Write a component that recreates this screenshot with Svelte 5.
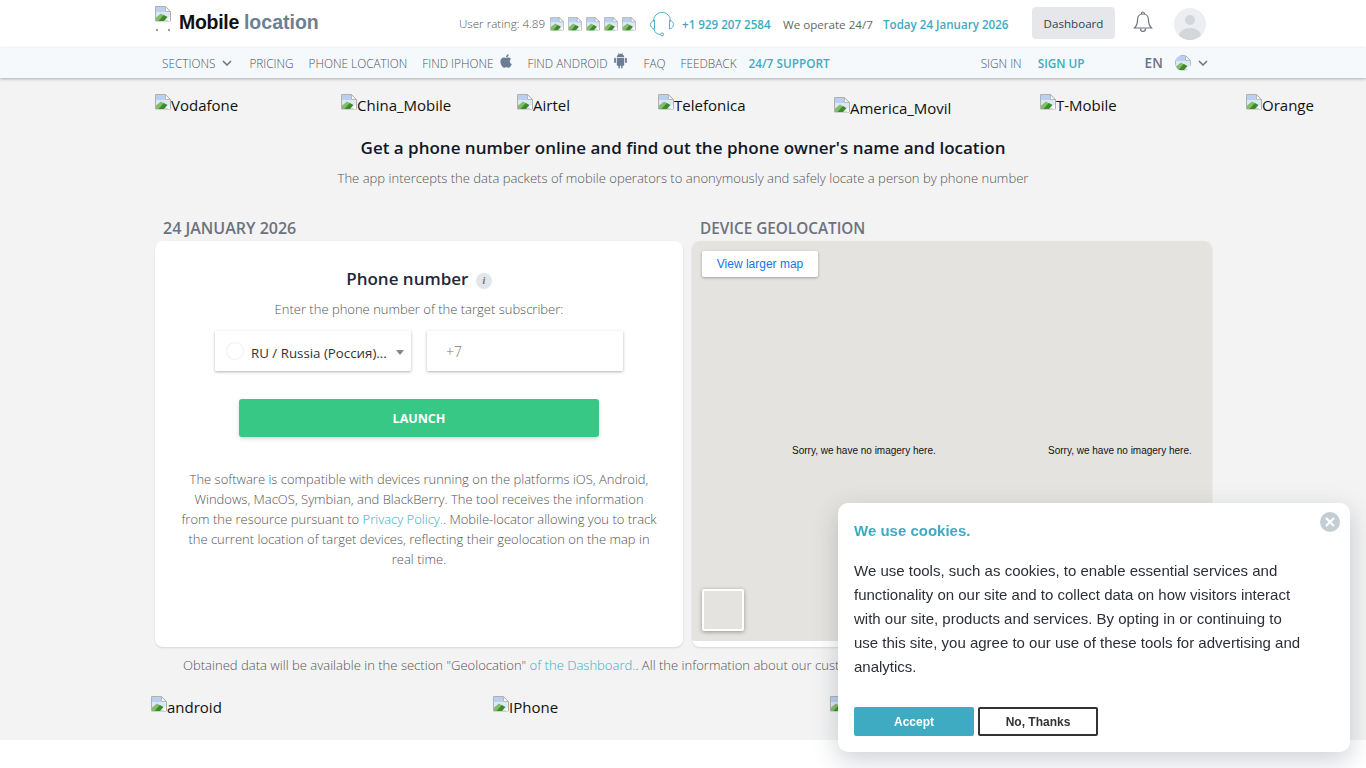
<script>
  const logos = [
    { alt: 'Vodafone', w: 186 },
    { alt: 'China_Mobile', w: 176 },
    { alt: 'Airtel', w: 141 },
    { alt: 'Telefonica', w: 176 },
    { alt: 'America_Movil', w: 206, low: true },
    { alt: 'T-Mobile', w: 206 },
    { alt: 'Orange', w: 70 }
  ];
  const stars = [1, 2, 3, 4, 5];
</script>

{#snippet broken()}
  <svg class="broken" viewBox="0 0 16 16" width="16" height="16" aria-hidden="true">
    <path d="M.5.500h10l5 5v9.500H.5z" fill="#f4f7fb" stroke="#b0b0b0"/>
    <path d="M1 1h9.300v5H15v3H1z" fill="#b9d0f0"/>
    <path d="M1 6h14v5l-3 .5-3 3.500H1z" fill="#dce8f6"/>
    <path d="M1 15v-3.500L6 7.500l3.500 2L5 15z" fill="#86bb6c"/>
    <path d="M3.500 15l5.300-6 3.700 2L9 15z" fill="#3a8c26"/>
    <path d="M12.500 15l2.500-3.500V15z" fill="#fff"/>
    <path d="M10.500.8v4.700h4.700z" fill="#fff" stroke="#a8a8a8" stroke-width=".8"/>
  </svg>
{/snippet}

<div class="page">
  <header class="top">
    <div class="wrap top-in">
      <div class="logo">
        <span class="logo-img">{@render broken()}<i></i></span>
        <b class="logo-a">Mobile</b><b class="logo-b">location</b>
      </div>
      <div class="rating">
        <span>User rating: 4.89</span>
        <span class="stars">{#each stars as s (s)}{@render broken()}{/each}</span>
      </div>
      <svg class="headset" viewBox="0 0 26 26" width="26" height="26" fill="none" stroke="#3eabc3" stroke-width=".9">
        <path d="M4.500 10.500C4.500 5 8 1.500 13 1.500s8.500 3.500 8.500 9"/>
        <path d="M5.500 9C3 10 1.500 11.500 1.500 13.500S3 17.500 5.500 18zM20.500 9c2.500 1 4 2.500 4 4.500s-1.500 4-4 4.500z"/>
        <path d="M5 18c.5 3.500 3 5.500 6.500 5.500"/>
        <circle cx="13" cy="23.500" r="1.500"/>
      </svg>
      <span class="phone">+1 929 207 2584</span>
      <span class="operate">We operate 24/7</span>
      <span class="today">Today 24 January 2026</span>
      <button class="dash">Dashboard</button>
      <svg class="bell" viewBox="0 0 20 22" width="20" height="22" fill="none" stroke="#6b7280" stroke-width="1.200">
        <path d="M10 3c-3.500 0-5.500 2.500-5.500 6 0 4-1 6-3 8h17c-2-2-3-4-3-8 0-3.500-2-6-5.500-6z"/>
        <path d="M8.500 3c0-1 .5-2 1.500-2s1.500 1 1.500 2M7.500 17.500c0 1.800 1 3 2.500 3s2.500-1.200 2.500-3"/>
      </svg>
      <span class="avatar"><i></i><em></em></span>
    </div>
  </header>

  <nav class="nav">
    <div class="wrap nav-in">
      <a class="n sec" href="#s">SECTIONS
        <svg viewBox="0 0 10 6" width="10" height="6" fill="none" stroke="#6b7280" stroke-width="1.500"><path d="M1 1l4 4 4-4"/></svg>
      </a>
      <a class="n m15" href="#p">PRICING</a>
      <a class="n m15" href="#l">PHONE LOCATION</a>
      <a class="n gi" href="#i">FIND IPHONE
        <svg class="up" viewBox="0 0 14 16" width="14" height="16" fill="#6b7c93"><path d="M11.600 8.400c0-1.600 1.300-2.400 1.400-2.500-.8-1.100-2-1.300-2.400-1.300-1-.1-2 .6-2.500.6s-1.300-.6-2.200-.6C4.700 4.600 3.600 5.300 3 6.300c-1.200 2-.3 5.100.9 6.800.6.800 1.300 1.700 2.200 1.700.9 0 1.200-.6 2.300-.6s1.400.6 2.300.6 1.500-.8 2.100-1.700c.7-1 1-1.900 1-2-.1 0-1.900-.7-1.900-2.700zM9.900 3.500c.5-.6.800-1.400.7-2.200-.7 0-1.500.5-2 1.100-.4.500-.8 1.300-.7 2.100.8 0 1.500-.4 2-1z"/></svg>
      </a>
      <a class="n gi m16" href="#a">FIND ANDROID
        <svg class="up" viewBox="0 0 14 16" width="15" height="17" fill="#6b7c93"><path d="M3.500 5.300h7V12c0 .5-.4.900-.9.900H9v2c0 1-1.400 1-1.400 0v-2H6.400v2c0 1-1.400 1-1.400 0v-2h-.6c-.5 0-.9-.4-.9-.9zM1.800 5.300c.5 0 .9.300.9.800v3.600c0 1-1.700 1-1.700 0V6.100c0-.5.400-.8.800-.8zM12.200 5.300c.4 0 .8.300.8.800v3.600c0 1-1.700 1-1.700 0V6.100c0-.5.400-.8.900-.8zM3.500 4.800C3.500 3.500 4.300 2.500 5.300 2L4.700.9l.3-.2.700 1.200c.8-.3 1.800-.3 2.600 0L9 .7l.3.200L8.700 2c1 .5 1.800 1.500 1.800 2.800z"/></svg>
      </a>
      <a class="n m15" href="#f">FAQ</a>
      <a class="n m12" href="#b">FEEDBACK</a>
      <a class="n teal" href="#t">24/7 SUPPORT</a>
      <a class="n signin" href="#in">SIGN IN</a>
      <a class="n teal signup" href="#up">SIGN UP</a>
      <span class="lang">EN</span>
      <span class="flag">{@render broken()}</span>
      <svg class="lc" viewBox="0 0 10 6" width="10" height="6" fill="none" stroke="#6b7280" stroke-width="1.500"><path d="M1 1l4 4 4-4"/></svg>
    </div>
  </nav>

  <main class="main">
    <div class="wrap">
      <div class="logos">
        {#each logos as l (l.alt)}
          <span class="alt" class:low={l.low} style="width:{l.w}px">{@render broken()}{l.alt}</span>
        {/each}
      </div>

      <h1>Get a phone number online and find out the phone owner's name and location</h1>
      <p class="sub">The app intercepts the data packets of mobile operators to anonymously and safely locate a person by phone number</p>

      <div class="cols">
        <section class="col-l">
          <h2>24 JANUARY 2026</h2>
          <div class="card">
            <h3>Phone number <span class="info">i</span></h3>
            <p class="hint">Enter the phone number of the target subscriber:</p>
            <div class="fields">
              <div class="sel">
                <span class="dot"></span>
                <span class="sel-t">RU / Russia (Россия)...</span>
                <span class="tri"></span>
              </div>
              <div class="inp"><span>+7</span></div>
            </div>
            <button class="launch">LAUNCH</button>
            <p class="desc">The software is compatible with devices running on the platforms iOS, Android,<br>Windows, MacOS, Symbian, and BlackBerry. The tool receives the information<br>from the resource pursuant to <a href="#pp">Privacy Policy.</a>. Mobile-locator allowing you to track<br>the current location of target devices, reflecting their geolocation on the map in<br>real time.</p>
          </div>
        </section>
        <section class="col-r">
          <h2>DEVICE GEOLOCATION</h2>
          <div class="mapcard">
            <div class="map">
              <button class="larger">View larger map</button>
              <span class="noimg a">Sorry, we have no imagery here.</span>
              <span class="noimg b">Sorry, we have no imagery here.</span>
              <span class="thumb"></span>
            </div>
          </div>
        </section>
      </div>

      <p class="note">Obtained data will be available in the section "Geolocation" <a href="#d">of the Dashboard.</a>. All the information about our customers is strictly confidential.</p>

      <div class="devices">
        <span class="alt d1">{@render broken()}android</span>
        <span class="alt d2">{@render broken()}IPhone</span>
        <span class="alt d3">{@render broken()}Windows</span>
      </div>
    </div>
  </main>

  <aside class="cookie">
    <button class="x" aria-label="Close">
      <svg viewBox="0 0 10 10" width="10" height="10" stroke="#fff" stroke-width="2.200"><path d="M1 1l8 8M9 1l-8 8"/></svg>
    </button>
    <h4>We use cookies.</h4>
    <p>We use tools, such as cookies, to enable essential services and functionality on our site and to collect data on how visitors interact with our site, products and services. By opting in or continuing to use this site, you agree to our use of these tools for advertising and analytics.</p>
    <div class="cbtns">
      <button class="acc">Accept</button>
      <button class="no">No, Thanks</button>
    </div>
  </aside>
</div>

<style>
  :global(body) { margin: 0; background: #fff; overflow: hidden; }
  .page { font-family: "Open Sans", "Noto Sans", sans-serif; height: 768px; overflow: hidden; position: relative; }
  .wrap { width: 1056px; margin: 0 0 0 155px; }
  .broken { display: inline-block; flex: none; }
  button { font-family: inherit; cursor: pointer; }
  a { text-decoration: none; }

  .top { height: 48px; background: #fff; }
  .top-in { display: flex; align-items: center; height: 48px; font-size: 11.600px; color: #6b7280; }
  .logo { width: 304px; display: flex; align-items: center; font-family: "Liberation Sans", sans-serif; font-size: 19.500px; height: 44px; margin-bottom: 4px; }
  .logo-img { width: 24px; height: 36px; flex: none; overflow: hidden; display: block; position: relative; }
  .logo-img i { position: absolute; left: 1px; top: 25px; width: 14px; height: 2px; border-left: 2px dotted #999; border-right: 2px dotted #999; box-sizing: border-box; }
  .logo-a { color: #111; margin-right: 5px; letter-spacing: -.3px; }
  .logo-b { color: #6b7f95; }
  .rating { display: flex; align-items: center; gap: 5px; font-weight: 300; width: 186px; margin-bottom: 1px; color: #555; white-space: nowrap; }
  .stars { display: inline-flex; gap: 4px; margin-top: 1px; }
  .stars :global(.broken) { width: 14px; height: 14px; }
  .headset { margin: 0 7px 0 4px; }
  .phone { color: #3eabc3; font-weight: 600; white-space: nowrap; width: 101px; margin-top: 1px; }
  .operate { font-weight: 400; color: #666; white-space: nowrap; width: 100px; margin-top: 1px; }
  .today { color: #3eabc3; font-weight: 600; white-space: nowrap; width: 149px; margin-top: 1px; }
  .dash { width: 83px; height: 32px; border: 0; border-radius: 4px; background: #e5e7eb; color: #374151; font-size: 11.600px; font-weight: 400; padding: 0; margin-bottom: 2px; }
  .bell { margin: 0 21px 4px 18px; }
  .avatar { width: 32px; height: 32px; border-radius: 50%; background: #eceef1; position: relative; overflow: hidden; display: block; }
  .avatar i { position: absolute; left: 11px; top: 7px; width: 10px; height: 10px; border-radius: 50%; background: #d3d6da; }
  .avatar em { position: absolute; left: 5px; top: 20px; width: 22px; height: 16px; border-radius: 50%; background: #d3d6da; }

  .nav { height: 30px; background: #f5f9fc; box-shadow: 0 1px 3px rgba(0,0,0,.3); position: relative; z-index: 2; }
  .nav-in { display: flex; align-items: center; height: 30px; font-size: 11.800px; font-weight: 300; color: #4b5563; padding-left: 7px; box-sizing: border-box; white-space: nowrap; }
  .n { color: #4b5563; margin-right: 14px; display: inline-flex; align-items: center; }
  .m15 { margin-right: 15px; }
  .m12 { margin-right: 12px; }
  .sec { gap: 7px; margin-right: 17px; }
  .gi { gap: 5px; margin-right: 15px; }
  .m16 { margin-right: 16px; }
  .up { margin-top: -5px; }
  .teal { color: #3eabc3; font-weight: 600; }
  .signin { margin-left: 137px; margin-right: 16px; }
  .signup { margin-right: 60px; }
  .lang { font-size: 13.500px; font-weight: 600; color: #6b7280; width: 30px; }
  .flag { width: 16px; height: 16px; border-radius: 50%; overflow: hidden; display: block; }
  .lc { margin-left: 7px; }

  .main { height: 662px; background-color: #f3f3f3; overflow: hidden; }
  .logos { display: flex; height: 25px; padding-top: 15px; white-space: nowrap; font-size: 15px; color: #111; }
  .alt { display: inline-block; line-height: 24px; flex: none; }
  .alt :global(.broken) { vertical-align: 1px; }
  .low { margin-top: 3px; }
  h1 { margin: 19px 0 0; font-size: 17px; line-height: 22px; font-weight: 600; color: #111827; text-align: center; white-space: nowrap; }
  .sub { margin: 10px 0 0; font-size: 13.050px; line-height: 18px; font-weight: 300; color: #555; text-align: center; white-space: nowrap; }
  .cols { display: flex; gap: 9px; margin-top: 31px; width: 1057px; }
  .col-l { width: 528px; }
  .col-r { width: 520px; }
  h2 { margin: 0; height: 23px; padding-left: 8px; font-size: 16px; line-height: 21px; font-weight: 600; color: #6b7280; white-space: nowrap; }
  .col-r h2 { font-size: 15.300px; }
  .card { height: 406px; background: #fff; border-radius: 8px; box-shadow: 0 1px 2px rgba(0,0,0,.12); box-sizing: border-box; padding-top: 26px; text-align: center; }
  h3 { margin: 0; font-size: 17px; line-height: 24px; font-weight: 600; color: #1f2937; }
  .info { display: inline-block; width: 16px; height: 16px; margin-left: 3px; border-radius: 50%; background: #e2e6ea; color: #6b7280; font: italic 700 10px/16px "Liberation Serif", serif; vertical-align: 1px; }
  .hint { margin: 9px 0 0; font-size: 13px; line-height: 18px; font-weight: 300; color: #555; }
  .fields { display: flex; gap: 16px; margin: 13px 0 0 60px; }
  .sel, .inp { height: 40px; width: 196px; background: #fff; box-shadow: 0 1px 3px rgba(0,0,0,.3); display: flex; align-items: center; box-sizing: border-box; border-radius: 1px; }
  .sel { padding-left: 12px; font-size: 13.300px; color: #333; }
  .dot { width: 16px; height: 16px; border-radius: 50%; background: #fff; box-shadow: 0 0 2px rgba(0,0,0,.18); margin-right: 8px; flex: none; }
  .sel-t { width: 138px; text-align: left; white-space: nowrap; margin-top: 3px; }
  .tri { margin-left: 7px; margin-top: 3px; border: 4px solid transparent; border-top: 5px solid #888; border-bottom: 0; }
  .inp { padding-left: 19px; font-size: 14px; font-weight: 300; color: #777; }
  .inp span { margin-top: 1px; }
  .launch { display: block; width: 360px; height: 38px; margin: 28px 0 0 84px; border: 0; border-radius: 3px; background: #36c884; color: #fff; font-size: 12.500px; font-weight: 700; box-shadow: 0 2px 4px rgba(0,0,0,.15); }
  .desc { margin: 32px 0 0; font-size: 13px; line-height: 20px; font-weight: 300; color: #555; white-space: nowrap; }
  .desc a, .note a { color: #3eabc3; }
  .mapcard { height: 406px; background: #fff; border-radius: 8px; overflow: hidden; box-shadow: 0 1px 2px rgba(0,0,0,.12); }
  .map { height: 400px; background: #e5e3df; position: relative; font-family: "Liberation Sans", sans-serif; }
  .larger { position: absolute; left: 10px; top: 10px; width: 116px; height: 26px; border: 0; border-radius: 2px; background: #fff; color: #1a73e8; font: 12px "Liberation Sans", sans-serif; box-shadow: 0 1px 3px rgba(0,0,0,.3); padding: 0; }
  .noimg { position: absolute; top: 203px; font-size: 10px; line-height: 14px; color: #111; white-space: nowrap; }
  .noimg.a { left: 100px; }
  .noimg.b { left: 356px; }
  .thumb { position: absolute; left: 10px; top: 348px; width: 38px; height: 38px; border: 2px solid #fff; border-radius: 2px; background: #e5e3df; box-shadow: 0 1px 4px rgba(0,0,0,.35); }
  .note { margin: 9px 0 0; height: 18px; font-size: 13.050px; line-height: 18px; font-weight: 300; color: #555; white-space: nowrap; text-indent: 28px; }
  .devices { display: flex; margin: 21px 0 0 -4px; font-size: 15px; color: #111; white-space: nowrap; }
  .d1 { width: 342px; }
  .d2 { width: 337px; }

  .cookie { position: fixed; left: 838px; top: 503px; width: 512px; height: 249px; box-sizing: border-box; padding: 19px 16px 0; background: #fff; border-radius: 10px; box-shadow: 0 8px 24px rgba(60,70,90,.25); font-family: "Liberation Sans", sans-serif; z-index: 5; }
  .cookie h4 { margin: 0; font-size: 15px; line-height: 18px; font-weight: 700; color: #3eabc3; }
  .cookie p { margin: 19px 0 0; width: 450px; font-size: 15px; line-height: 24px; color: #2b2f36; }
  .x { position: absolute; right: 10px; top: 9px; width: 20px; height: 20px; border: 0; border-radius: 50%; background: #c4ccd4; padding: 0; display: flex; align-items: center; justify-content: center; }
  .cbtns { display: flex; gap: 4px; margin-top: 28px; }
  .cbtns button { width: 120px; height: 29px; border-radius: 2px; font: 700 12px "Liberation Sans", sans-serif; padding: 0; box-sizing: border-box; }
  .acc { background: #3eabc3; border: 0; color: #fff; }
  .no { background: #fff; border: 2px solid #333; color: #333; }
</style>
